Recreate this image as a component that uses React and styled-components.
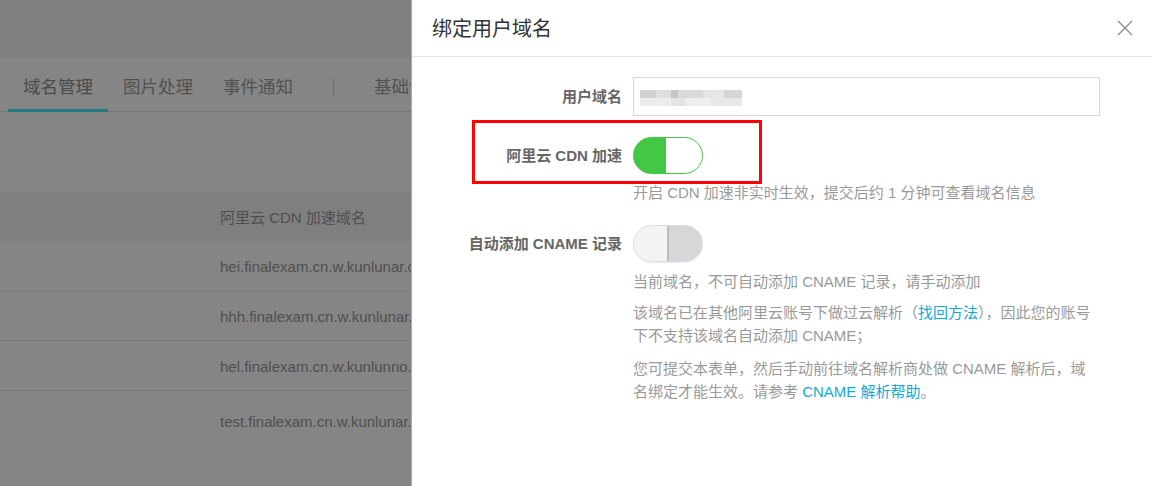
import React from 'react'
import styled, { createGlobalStyle } from 'styled-components'

const GlobalStyle = createGlobalStyle`
  html, body {
    margin: 0;
    padding: 0;
    background: #858585;
  }
  body {
    font-family: "Liberation Sans", "Noto Sans CJK SC", sans-serif;
    font-size: 15px;
  }
  * { box-sizing: border-box; }
`

const rows = [
  'hei.finalexam.cn.w.kunlunar.com',
  'hhh.finalexam.cn.w.kunlunar.com',
  'hel.finalexam.cn.w.kunlunno.com',
  'test.finalexam.cn.w.kunlunar.com',
]

const App = () => {
  return (
    <>
      <GlobalStyle />
      <Screen>
        <Page>
          <TopBar />
          <Tabs>
            <Tab active>域名管理</Tab>
            <Tab>图片处理</Tab>
            <Tab>事件通知</Tab>
            <TabSep />
            <Tab>基础设置</Tab>
          </Tabs>
          <Table>
            <HeadRow>
              <Cell>阿里云 CDN 加速域名</Cell>
            </HeadRow>
            {rows.map((r, i) => (
              <Row key={r} last={i === rows.length - 1}>
                <Cell>{r}</Cell>
              </Row>
            ))}
          </Table>
        </Page>

        <Drawer>
          <DrawerHeader>
            <Title>绑定用户域名</Title>
            <Close>
              <svg width="16" height="16" viewBox="0 0 16 16">
                <path d="M1 1 L15 15 M15 1 L1 15" stroke="#8a8a8a" strokeWidth="1.3" fill="none" />
              </svg>
            </Close>
          </DrawerHeader>

          <Form>
            <FormRow>
              <Label>用户域名</Label>
              <Control>
                <Input>
                  <Blurred>
                    <span />
                    <span />
                  </Blurred>
                </Input>
              </Control>
            </FormRow>

            <FormRow gap={21}>
              <Highlight />
              <Label tall>阿里云 CDN 加速</Label>
              <Control>
                <Switch on />
                <Help top={7}>开启 CDN 加速非实时生效，提交后约 1 分钟可查看域名信息</Help>
              </Control>
            </FormRow>

            <FormRow gap={21}>
              <Label tall>自动添加 CNAME 记录</Label>
              <Control>
                <Switch />
                <Help top={8}>当前域名，不可自动添加 CNAME 记录，请手动添加</Help>
                <Help top={8}>
                  该域名已在其他阿里云账号下做过云解析（<A>找回方法</A>），因此您的账号下不支持该域名自动添加 CNAME；
                </Help>
                <Help top={10}>
                  您可提交本表单，然后手动前往域名解析商处做 CNAME 解析后，域名绑定才能生效。请参考 <A>CNAME 解析帮助</A>。
                </Help>
              </Control>
            </FormRow>
          </Form>
        </Drawer>
      </Screen>
    </>
  )
}

export default App

const Screen = styled.div`
  display: flex;
  width: 1152px;
  height: 486px;
  overflow: hidden;
`

const Page = styled.div`
  width: 411px;
  flex-shrink: 0;
  background: #858585;
  overflow: hidden;
  white-space: nowrap;
`

const TopBar = styled.div`
  height: 58px;
  background: #7f7f7f;
`

const Tabs = styled.div`
  display: flex;
  align-items: stretch;
  height: 54px;
  padding-left: 8px;
  border-bottom: 1px solid #767676;
`

const Tab = styled.div`
  display: flex;
  align-items: center;
  padding: 4px 15px 0;
  font-size: 17.5px;
  color: ${p => (p.active ? '#4a4a4a' : '#515151')};
  border-bottom: 3px solid ${p => (p.active ? '#237a80' : 'transparent')};
  margin-bottom: -1px;
  flex-shrink: 0;
`

const TabSep = styled.div`
  flex: 0 0 1px;
  height: 18px;
  align-self: center;
  margin: 4px 25px 0 25px;
  background: #6e6e6e;
`

const Table = styled.div`
  margin-top: 80px;
`

const HeadRow = styled.div`
  height: 49px;
  display: flex;
  align-items: center;
  background: #7f7f7f;
`

const Row = styled.div`
  height: ${p => (p.last ? '60px' : '50px')};
  display: flex;
  align-items: center;
  border-bottom: ${p => (p.last ? 'none' : '1px solid #7a7a7a')};
  padding-top: ${p => (p.last ? '0' : '1px')};
`

const Cell = styled.div`
  padding-left: 220px;
  font-size: 15px;
  color: #4f4f4f;
`

const Drawer = styled.div`
  flex: 1;
  background: #fff;
  border-left: 1px solid #a9a9a9;
  display: flex;
  flex-direction: column;
`

const DrawerHeader = styled.div`
  height: 57px;
  display: flex;
  align-items: center;
  justify-content: space-between;
  padding: 0 19px 2px 20px;
  border-bottom: 1px solid #e3e3e3;
`

const Title = styled.div`
  font-size: 20px;
  color: #333;
`

const Close = styled.div`
  width: 16px;
  height: 16px;
  display: flex;
  margin-top: 2px;
`

const Form = styled.div`
  padding: 20px 52px 0 0;
`

const FormRow = styled.div`
  position: relative;
  display: flex;
  margin-top: ${p => (p.gap ? `${p.gap}px` : '0')};
`

const Label = styled.div`
  width: 210px;
  flex-shrink: 0;
  text-align: right;
  font-weight: bold;
  font-size: 15px;
  color: #666;
  height: ${p => (p.tall ? '37px' : '39px')};
  line-height: ${p => (p.tall ? '37px' : '39px')};
`

const Control = styled.div`
  flex: 1;
  margin-left: 11px;
`

const Input = styled.div`
  height: 39px;
  border: 1px solid #d6d6d6;
  display: flex;
  align-items: center;
  padding-left: 6px;
`

const Blurred = styled.div`
  display: flex;
  flex-direction: column;
  margin-top: 2px;

  span {
    display: block;
    width: 102px;
    height: 8px;
  }
  span:nth-child(1) {
    background: linear-gradient(to right,
      #d2d2d4 0 16%, #dedee0 16% 30%, #c4c6c6 30% 37%, #dadada 37% 62%,
      #e6e6e6 62% 72%, #eae6e4 72% 82%, #d4d6dc 82% 100%);
  }
  span:nth-child(2) {
    background: linear-gradient(to right,
      #ececec 0 30%, #e4e4e4 30% 45%, #eeeeee 45% 70%, #e8e8ea 70% 100%);
  }
`

const Switch = styled.div`
  width: 70px;
  height: 37px;
  border-radius: 19px;
  border: 1px solid ${p => (p.on ? '#44c744' : '#dddddd')};
  background: ${p =>
    p.on
      ? 'linear-gradient(to right, #44c744 0 47%, #ffffff 47% 100%)'
      : 'linear-gradient(to right, #f3f3f3 0 49%, #bdbdbd 49% 51%, #d7d7d9 51% 100%)'};
  box-shadow: ${p => (p.on ? 'none' : '0 1px 1px rgba(0,0,0,0.08)')};
`

const Help = styled.p`
  margin: ${p => p.top || 0}px 0 0;
  font-size: 15px;
  line-height: 23px;
  color: #999;
`

const A = styled.a`
  color: #12a9d6;
  text-decoration: none;
  cursor: pointer;
`

const Highlight = styled.div`
  position: absolute;
  left: 60px;
  top: -17px;
  width: 290px;
  height: 64px;
  border: 3px solid #ff0000;
  pointer-events: none;
`
